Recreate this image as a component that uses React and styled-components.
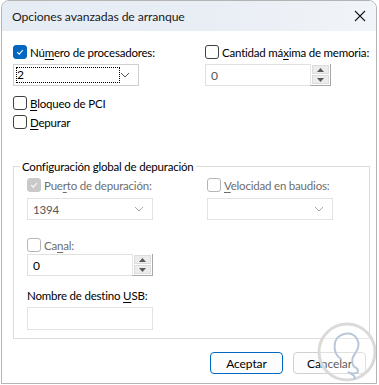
import React from 'react';
import styled, { createGlobalStyle } from 'styled-components';

const Global = createGlobalStyle`
  html, body { margin: 0; padding: 0; background: #ffffff; }
  body { font-family: Lato, "Noto Sans", sans-serif; font-size: 11.5px; letter-spacing: -0.2px; color: #000; }
`;

const Window = styled.div`
  position: relative;
  box-sizing: border-box;
  width: 376px;
  height: 384px;
  margin-left: 1px;
  border: 1px solid #b4b4b4;
  border-radius: 8px 8px 0 0;
  background: #ffffff;
  overflow: hidden;
  display: flex;
  flex-direction: column;
`;

const TitleBar = styled.div`
  height: 30px;
  flex: none;
  display: flex;
  align-items: center;
  justify-content: space-between;
  padding: 0 10px 0 10px;
  background: linear-gradient(90deg, #e6ecf4 0%, #e9eef5 55%, #f1f4f8 100%);
`;

const Title = styled.span`
  font-size: 12.2px;
  letter-spacing: -0.1px;
  color: #1a1a1a;
`;

const Body = styled.div`
  flex: 1;
  display: flex;
  flex-direction: column;
  padding: 14px 4px 0 11px;
`;

const TwoCols = styled.div`
  display: grid;
  grid-template-columns: ${p => p.$left || 192}px 1fr;
  align-items: start;
`;

const Column = styled.div`
  display: flex;
  flex-direction: column;
  gap: ${p => p.$gap || 5}px;
`;

const CheckLine = styled.label`
  display: flex;
  align-items: center;
  gap: 3px;
  height: 14px;
  color: ${p => (p.$disabled ? '#6d6d6d' : '#000')};
  margin-top: ${p => p.$mt || 0}px;
  white-space: nowrap;
`;

const Box = styled.span`
  box-sizing: border-box;
  width: 14px;
  height: 14px;
  border-radius: 3px;
  flex: none;
  display: flex;
  align-items: center;
  justify-content: center;
  background: ${p => (p.$checked ? (p.$disabled ? '#c9c9c9' : '#0067c0') : '#fff')};
  border: 1px solid ${p => (p.$checked ? (p.$disabled ? '#c9c9c9' : '#0067c0') : p.$disabled ? '#b5b5b5' : '#404040')};
`;

const Key = styled.u`
  text-underline-offset: 2px;
`;

const Select = styled.div`
  box-sizing: border-box;
  width: 126px;
  height: 22px;
  border: 1px solid ${p => (p.$disabled ? '#e3e3e3' : '#cfcfcf')};
  display: flex;
  align-items: center;
  justify-content: space-between;
  padding: 0 8px 0 ${p => (p.$focus ? 2 : 5)}px;
  color: ${p => (p.$disabled ? '#555' : '#000')};
  background: #fff;
`;

const FocusValue = styled.span`
  box-sizing: border-box;
  width: 104px;
  height: 16px;
  line-height: 15px;
  padding-left: 1px;
  font-size: 12px;
  outline: 1px dotted #000;
  outline-offset: -1px;
`;

const Chevron = ({ color = '#555' }) => (
  <svg width="10" height="6" viewBox="0 0 10 6">
    <polyline points="1,1 5,5 9,1" fill="none" stroke={color} strokeWidth="1" />
  </svg>
);

const Tick = ({ color = '#fff' }) => (
  <svg width="10" height="10" viewBox="0 0 10 10">
    <polyline points="2.2,5.2 4.2,7.1 7.9,3" fill="none" stroke={color} strokeWidth="1.1" />
  </svg>
);

const Spin = styled.div`
  box-sizing: border-box;
  width: 126px;
  height: 22px;
  border: 1px solid #e1e1e1;
  display: flex;
  align-items: stretch;
  background: #fff;
`;

const SpinText = styled.span`
  flex: 1;
  display: flex;
  align-items: center;
  padding-left: 5px;
  font-size: 12px;
  color: ${p => (p.$muted ? '#555' : '#000')};
`;

const SpinButtons = styled.div`
  width: 17px;
  display: flex;
  flex-direction: column;
  gap: 1px;
  padding: 1px;
  border-left: 1px solid #e6e6e6;
  border-right: 1px solid #a7a7a7;
  border-bottom: 1px solid #a7a7a7;
  margin: -1px -1px -1px 0;
  background: #fff;
`;

const SpinBtn = styled.div`
  flex: 1;
  background: #ececec;
  border: 1px solid #dcdcdc;
  display: flex;
  align-items: center;
  justify-content: center;
`;

const Tri = ({ up }) => (
  <svg width="7" height="4" viewBox="0 0 7 4">
    <polygon points={up ? '0,4 7,4 3.5,0' : '0,0 7,0 3.5,4'} fill="#5a5a5a" />
  </svg>
);

const Group = styled.fieldset`
  margin: 31px 0 0 0;
  padding: 5px 0 8px 13px;
  width: 357px;
  box-sizing: border-box;
  border: 1px solid #dcdcdc;
  border-radius: 0;
  min-width: 0;
`;

const Legend = styled.legend`
  padding: 0 2px;
  margin-left: -7px;
  color: #000;
`;

const Label = styled.div`
  height: 14px;
  line-height: 14px;
  margin-top: 13px;
`;

const TextBox = styled.div`
  box-sizing: border-box;
  width: 126px;
  height: 23px;
  margin-top: 4px;
  border: 1px solid #e3e3e3;
  background: #fff;
`;

const Footer = styled.div`
  display: flex;
  justify-content: flex-end;
  gap: 10px;
  padding: 13px 6px 0 0;
`;

const Button = styled.button`
  box-sizing: border-box;
  width: 73px;
  height: 22px;
  border-radius: 4px;
  font-family: inherit;
  font-size: 12px;
  letter-spacing: -0.1px;
  color: #000;
  background: #fdfdfd;
  border: 1px solid ${p => (p.$primary ? '#0067c0' : '#d0d0d0')};
  box-shadow: ${p => (p.$primary ? 'inset 0 0 0 1px #fff' : 'none')};
  padding: 0;
`;

const Watermark = styled.svg`
  position: absolute;
  right: -8px;
  bottom: -6px;
  pointer-events: none;
`;

function Check({ checked, disabled, children, mt }) {
  return (
    <CheckLine $disabled={disabled} $mt={mt}>
      <Box $checked={checked} $disabled={disabled}>
        {checked && <Tick />}
      </Box>
      <span>{children}</span>
    </CheckLine>
  );
}

function Spinner({ value, muted }) {
  return (
    <Spin>
      <SpinText $muted={muted}>{value}</SpinText>
      <SpinButtons>
        <SpinBtn><Tri up /></SpinBtn>
        <SpinBtn><Tri /></SpinBtn>
      </SpinButtons>
    </Spin>
  );
}

export default function App() {
  return (
    <>
      <Global />
      <Window>
        <TitleBar>
          <Title>Opciones avanzadas de arranque</Title>
          <svg width="12" height="12" viewBox="0 0 12 12">
            <path d="M1 1 L11 11 M11 1 L1 11" stroke="#1a1a1a" strokeWidth="1.1" />
          </svg>
        </TitleBar>
        <Body>
          <TwoCols>
            <Column>
              <Check checked>
                Nú<Key>m</Key>ero de procesadores:
              </Check>
              <Select $focus>
                <FocusValue>2</FocusValue>
                <Chevron />
              </Select>
            </Column>
            <Column>
              <Check>
                Cantidad má<Key>x</Key>ima de memoria:
              </Check>
              <Spinner value="0" muted />
            </Column>
          </TwoCols>
          <Check mt={10}>
            <Key>B</Key>loqueo de PCI
          </Check>
          <Check mt={5}>
            <Key>D</Key>epurar
          </Check>
          <Group>
            <Legend>Configuración global de depuración</Legend>
            <TwoCols $left={180}>
              <Column $gap={6}>
                <Check checked disabled>
                  Pue<Key>r</Key>to de depuración:
                </Check>
                <Select $disabled>
                  <span>1394</span>
                  <Chevron color="#a9a9a9" />
                </Select>
              </Column>
              <Column $gap={6}>
                <Check disabled>
                  <Key>V</Key>elocidad en baudios:
                </Check>
                <Select $disabled>
                  <span />
                  <Chevron color="#a9a9a9" />
                </Select>
              </Column>
            </TwoCols>
            <Column $gap={2}>
              <Check disabled mt={18}>
                Ca<Key>n</Key>al:
              </Check>
              <Spinner value="0" />
            </Column>
            <Label>
              Nombre de destino <Key>U</Key>SB:
            </Label>
            <TextBox />
          </Group>
          <Footer>
            <Button $primary>Aceptar</Button>
            <Button>Cancelar</Button>
          </Footer>
        </Body>
        <Watermark width="70" height="70" viewBox="0 0 70 70">
          <circle cx="33" cy="33" r="28" fill="rgba(255,255,255,0.35)" stroke="#dadada" strokeWidth="3" />
          <path
            d="M27 40 C18 34 18 18 30 15 C42 12 48 24 42 33 C39 38 37 40 39 46 C41 50 44 48 44 52 C44 55 36 55 34 53 C38 55 43 58 40 60"
            fill="none"
            stroke="#b9c8d8"
            strokeWidth="2"
            strokeLinecap="round"
          />
        </Watermark>
      </Window>
    </>
  );
}
